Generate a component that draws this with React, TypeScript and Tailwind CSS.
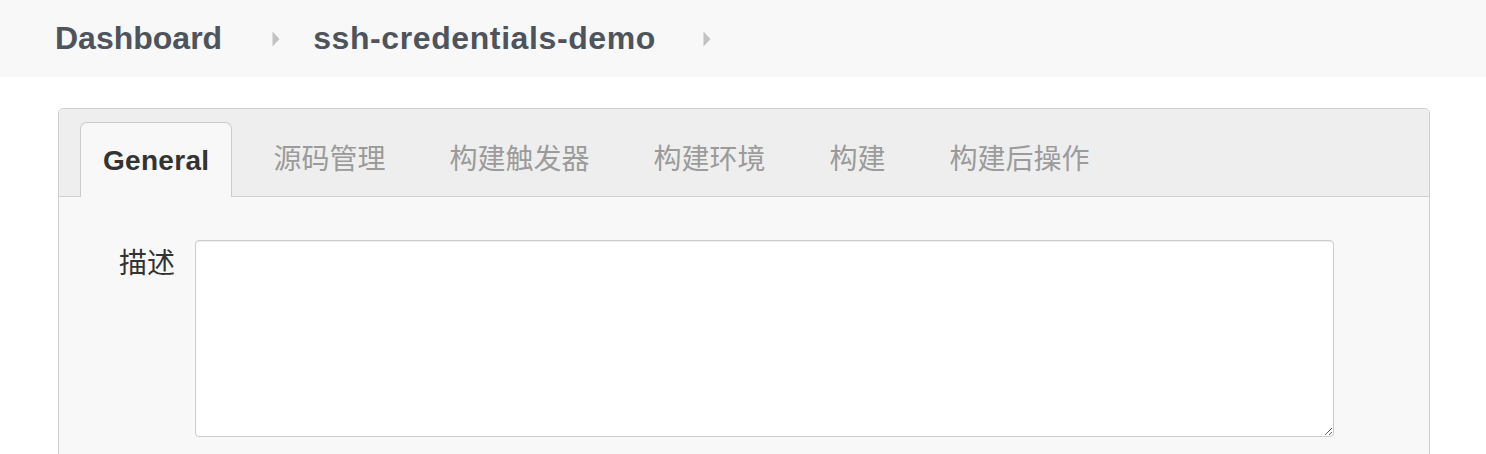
import React from "react";

const Arrow = () => (
  <svg width="8" height="18" viewBox="0 0 8 18" className="shrink-0">
    <path d="M0.5 1.5 L7.5 9 L0.5 16.5 Z" fill="#c2c2c2" />
  </svg>
);

const tabs = ["源码管理", "构建触发器", "构建环境", "构建", "构建后操作"];

export default function App() {
  const cjk = {
    fontFamily: '"Liberation Sans", "Noto Sans CJK SC", sans-serif',
  };
  return (
    <div className="min-h-[454px] bg-white" style={cjk}>
      <div className="h-[77px] bg-[#f8f8f8] flex items-center pl-[55px] pb-[1px]">
        <span className="text-[32px] font-bold text-[#4d545d] leading-none">Dashboard</span>
        <span className="ml-[50px] pt-[2px]"><Arrow /></span>
        <span className="ml-[33px] text-[32px] font-bold text-[#4d545d] leading-none tracking-[0.6px]">
          ssh-credentials-demo
        </span>
        <span className="ml-[47px] pt-[2px]"><Arrow /></span>
      </div>

      <div className="mt-[31px] ml-[58px] mr-[56px] border border-[#cfcfcf] rounded-[5px] overflow-hidden">
        <div className="bg-[#eeeeee] border-b border-[#cfcfcf] h-[88px] flex items-end pl-[21px] gap-[20px]">
          <div className="h-[75px] -mb-[1px] bg-[#f8f8f8] border border-b-0 border-[#cccccc] rounded-t-[7px] px-[22px] flex items-center">
            <span className="text-[28px] font-bold text-[#333333] leading-none pt-[1px] tracking-[0.3px]">General</span>
          </div>
          {tabs.map((t, i) => (
            <div
              key={t}
              className={`h-[75px] -mb-[1px] px-[21px] flex items-center border border-transparent ${i === 0 ? "-ml-[1px]" : ""}`}
            >
              <span className="text-[28px] text-[#9b9b9b] leading-none pt-[1px]">{t}</span>
            </div>
          ))}
        </div>
        <div className="bg-[#f8f8f8] pt-[43px] pb-[20px] flex items-start">
          <div className="w-[116px] text-right text-[28px] text-[#333333] leading-none pt-[10px]">描述</div>
          <textarea
            className="ml-[20px] w-[1139px] h-[197px] bg-white border border-[#cccccc] rounded-[4px] shadow-[inset_0_1px_1px_rgba(0,0,0,0.075)] resize-y outline-none"
          />
        </div>
      </div>
    </div>
  );
}
